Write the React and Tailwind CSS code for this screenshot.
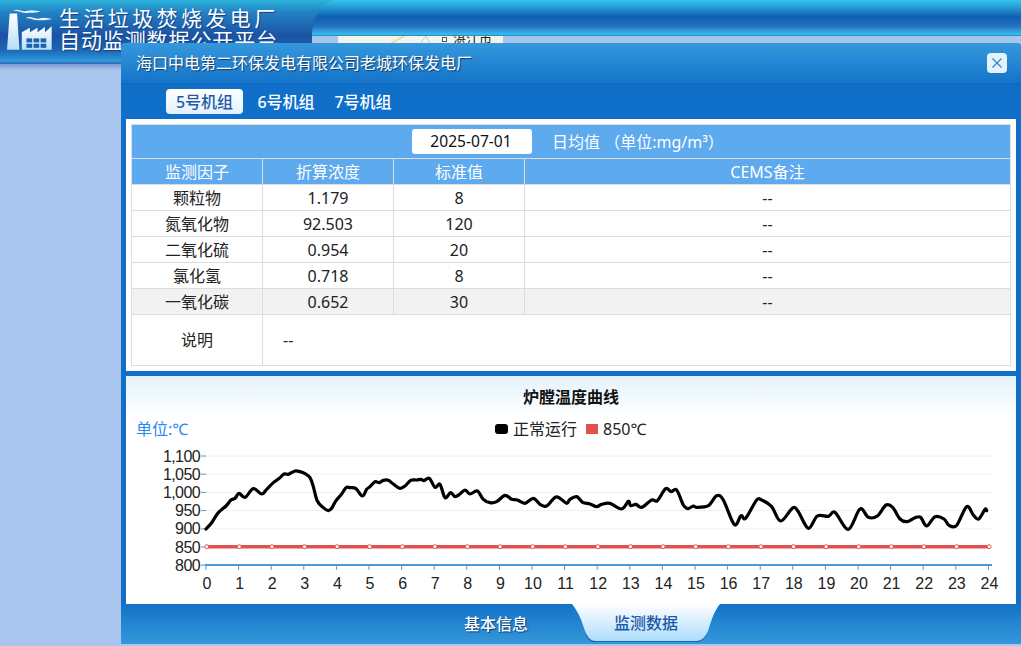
import React from 'react';

const cjk = "font-['Noto_Sans','Noto_Sans_CJK_SC',sans-serif]";

const rows = [
  { name: '颗粒物', value: '1.179', limit: '8' },
  { name: '氮氧化物', value: '92.503', limit: '120' },
  { name: '二氧化硫', value: '0.954', limit: '20' },
  { name: '氯化氢', value: '0.718', limit: '8' },
  { name: '一氧化碳', value: '0.652', limit: '30', hover: true },
];

// traced from the curve, in 3x crop units
const curveLeft = [
  [258, 477], [275, 458], [295, 428], [318, 408], [333, 390], [345, 385], [357, 370], [375, 382], [400, 356],
  [425, 372], [440, 358], [460, 338], [478, 325], [492, 312], [505, 313], [525, 303], [540, 305], [555, 311],
  [570, 323], [580, 350], [592, 393], [610, 413], [625, 422], [635, 415], [648, 392], [665, 372], [678, 353],
  [690, 353], [708, 356], [727, 378], [740, 358], [750, 350], [765, 335], [778, 338], [790, 331], [805, 331],
  [820, 342], [840, 355], [855, 348], [872, 331], [890, 330], [903, 328], [912, 332], [928, 325], [945, 352],
  [960, 343], [975, 383], [992, 368], [1005, 380], [1020, 372], [1035, 360], [1050, 372], [1072, 363], [1090, 388],
  [1110, 398], [1130, 395], [1155, 376], [1175, 388], [1192, 390], [1215, 400], [1240, 385], [1260, 403], [1280, 408],
  [1305, 382], [1320, 385], [1340, 400],
];
const curveRight = [
  [0, 178], [20, 170], [38, 187], [60, 192], [80, 200], [95, 193], [120, 190], [155, 207], [175, 184], [182, 197],
  [198, 193], [215, 202], [245, 180], [262, 182], [287, 146], [303, 155], [320, 150], [340, 195], [353, 206], [370, 198],
  [380, 202], [415, 197], [440, 167], [460, 180], [493, 254], [513, 227], [527, 235], [560, 180], [575, 180], [605, 200],
  [632, 243], [668, 204], [685, 215], [715, 265], [742, 228], [775, 229], [795, 217], [835, 268], [870, 207], [895, 232],
  [922, 228], [948, 195], [968, 202], [990, 237], [1012, 245], [1035, 233], [1052, 232], [1070, 258], [1095, 230], [1122, 237],
  [1137, 256], [1160, 256], [1190, 200], [1210, 225], [1226, 237], [1245, 208], [1250, 212],
];
const curve = [
  ...curveLeft.map(([x, y]) => [120 + x / 3, 370 + y / 3]),
  ...curveRight.map(([x, y]) => [570 + x / 3, 440 + y / 3]),
];

function smooth(pts) {
  let d = `M${pts[0][0]} ${pts[0][1]}`;
  for (let i = 0; i < pts.length - 1; i++) {
    const p0 = pts[i - 1] || pts[i];
    const p1 = pts[i];
    const p2 = pts[i + 1];
    const p3 = pts[i + 2] || p2;
    const c1x = p1[0] + (p2[0] - p0[0]) / 6;
    const c1y = p1[1] + (p2[1] - p0[1]) / 6;
    const c2x = p2[0] - (p3[0] - p1[0]) / 6;
    const c2y = p2[1] - (p3[1] - p1[1]) / 6;
    d += ` C${c1x} ${c1y} ${c2x} ${c2y} ${p2[0]} ${p2[1]}`;
  }
  return d;
}

const yTicks = ['1,100', '1,050', '1,000', '950', '900', '850', '800'];
const hours = Array.from({ length: 25 }, (_, i) => i);

function Logo() {
  return (
    <svg viewBox="18 6 134 124" className="w-[45px] h-[42px] shrink-0">
      <defs>
        <linearGradient id="logoFill" x1="0" y1="0" x2="0" y2="1">
          <stop offset="0" stopColor="#ffffff" />
          <stop offset="1" stopColor="#b5dff7" />
        </linearGradient>
      </defs>
      <path d="M26 22 L48 22 L55 130 L18 130 Z" fill="url(#logoFill)" />
      <path d="M62 130 L62 78 L86 64 L86 78 L109 64 L109 78 L131 62 L131 78 L151 60 L151 130 Z" fill="url(#logoFill)" />
      <g fill="#1c5fae">
        <rect x="76" y="96" width="17" height="12" />
        <rect x="97" y="96" width="17" height="12" />
        <rect x="118" y="96" width="17" height="12" />
        <rect x="76" y="112" width="17" height="12" />
        <rect x="97" y="112" width="17" height="12" />
        <rect x="118" y="112" width="17" height="12" />
      </g>
      <path d="M36 14 C50 4 62 20 80 14 C92 10 104 14 118 16 C100 20 92 20 78 20 C62 22 50 12 36 14 Z" fill="#e4f4fc" />
      <path d="M74 36 C88 26 100 42 116 36 C128 32 140 36 152 38 C134 42 126 42 114 42 C100 44 88 34 74 36 Z" fill="#e4f4fc" />
    </svg>
  );
}

function Header() {
  return (
    <header className="relative h-[70px]">
      <div className="absolute left-0 top-0 w-[312px] h-16 flex items-start pl-[7px] pt-[8px] gap-[7px] bg-[linear-gradient(180deg,#2cb4dc_0px,#2382c4_12px,#1a52a4_36px,#1c66b2_50px,#2b9ade_61px,#3a5fae_64px)]">
        <Logo />
        <div className={`${cjk} mt-[-1px] text-white [text-shadow:1px_1px_1px_#123f86] text-[21px] leading-[22px] whitespace-nowrap`}>
          <div className="tracking-[3.4px]">生活垃圾焚烧发电厂</div>
          <div className="tracking-[0.9px]">自动监测数据公开平台</div>
        </div>
      </div>
      <div className="absolute left-[312px] top-0 w-[26px] h-[35px] bg-[linear-gradient(180deg,#2cb4dc_0px,#2382c4_12px,#1a52a4_36px)]" />
      <div className="absolute left-[312px] right-0 top-0 h-[36px] rounded-tl-[25px_35px] border-b border-[#0d9ac6] bg-[linear-gradient(180deg,#30c6ec_0px,#2aa8dc_5px,#1060b2_17px,#2470c0_26px,#3cb6ec_34px)]" />
      <div className="absolute left-[338px] top-[36px] w-[165px] h-[8px] overflow-hidden bg-[#f5f3ee]">
        <svg viewBox="0 0 165 8" className="absolute inset-0 w-[165px] h-[8px]">
          <path d="M66 0 L52 8" stroke="#f3d58c" strokeWidth="1.5" fill="none" />
          <path d="M88 0 L82 8 M88 0 L92 8" stroke="#c4c6e6" strokeWidth="1" fill="none" />
        </svg>
        <span className="absolute left-[104px] top-[1px] w-[5px] h-[5px] border border-[#555] bg-white" />
        <span className={`${cjk} absolute left-[115px] top-[-7px] text-[13px] leading-[18px] text-[#222] whitespace-nowrap`}>湛江市</span>
      </div>
      <div className="absolute left-0 top-16 w-[121px] h-[6px] bg-[linear-gradient(180deg,#7f97d4,#a9c5ee)]" />
    </header>
  );
}

function DataTable() {
  return (
    <table className="w-[880px] table-fixed border-collapse text-[16px] text-[#222] text-center">
      <colgroup>
        <col className="w-[131px]" />
        <col className="w-[131px]" />
        <col className="w-[131px]" />
        <col />
      </colgroup>
      <thead>
        <tr className="h-[34px] bg-[#5eaaee]">
          <th colSpan={4} className="border border-[#dddddd] p-0 font-normal">
            <div className="flex items-center pl-[280px] text-white">
              <div className="w-[120px] h-[25px] pr-[2px] rounded-[3px] bg-white text-[#111] text-[15.6px] leading-[25px]">2025-07-01</div>
              <span className="ml-[20px] whitespace-pre">日均值 （单位:mg/m³）</span>
            </div>
          </th>
        </tr>
        <tr className="h-[26px] bg-[#5eaaee] text-white">
          {['监测因子', '折算浓度', '标准值', 'CEMS备注'].map((h) => (
            <th key={h} className="border border-[#dddddd] p-0 font-normal">{h}</th>
          ))}
        </tr>
      </thead>
      <tbody>
        {rows.map((r) => (
          <tr key={r.name} className={r.hover ? 'h-[26px] bg-[#f2f2f2]' : 'h-[26px] bg-white'}>
            <td className="border border-[#dddddd] p-0">{r.name}</td>
            <td className="border border-[#dddddd] p-0">{r.value}</td>
            <td className="border border-[#dddddd] p-0">{r.limit}</td>
            <td className="border border-[#dddddd] p-0">--</td>
          </tr>
        ))}
        <tr className="h-[51px]">
          <td className="border border-[#dddddd] p-0">说明</td>
          <td colSpan={3} className="border border-[#dddddd] p-0 pl-5 text-left">--</td>
        </tr>
      </tbody>
    </table>
  );
}

function Plot() {
  return (
    <svg viewBox="126 444 890 160" className="block w-[890px] h-[160px]">
      {[456, 474.2, 492.4, 510.6, 528.8].map((y) => (
        <line key={y} x1="206" x2="992" y1={y} y2={y} stroke="#eeeeee" strokeWidth="1" />
      ))}
      {yTicks.map((t, i) => {
        const y = 456 + i * 18.2;
        return (
          <g key={t}>
            <line x1="201" x2="206" y1={y} y2={y} stroke="#4a9bd0" strokeWidth="1" />
            <text x="200" y={y + 5.5} textAnchor="end" fontSize="16" fill="#222" letterSpacing="-0.6" fontFamily="'Liberation Sans', sans-serif">{t}</text>
          </g>
        );
      })}
      <line x1="205" x2="992" y1="565" y2="565" stroke="#4a9bd0" strokeWidth="2" />
      {hours.map((h) => {
        const x = 206 + h * 32.6;
        return (
          <g key={h}>
            <line x1={x} x2={x} y1="565" y2="570" stroke="#4a9bd0" strokeWidth="1" />
            <text x={207 + h * 32.6} y="589" textAnchor="middle" fontSize="16" fill="#222" fontFamily="'Liberation Sans', sans-serif">{h}</text>
          </g>
        );
      })}
      <line x1="206.7" x2="989.3" y1="546.7" y2="546.7" stroke="#e05252" strokeWidth="3.5" />
      {hours.map((h) => (
        <circle key={h} cx={206.7 + h * 32.6} cy="546.7" r="2" fill="#ffffff" stroke="#e05252" strokeWidth="1" />
      ))}
      <path d={smooth(curve)} fill="none" stroke="#000000" strokeWidth="3.2" strokeLinejoin="round" strokeLinecap="round" />
    </svg>
  );
}

function BottomTabs() {
  return (
    <div className={`${cjk} flex h-[40px] text-[16px] bg-[linear-gradient(180deg,#1472c8,#3498da)]`}>
      <div className="ml-[343px] w-[64px] h-full flex items-center justify-center whitespace-nowrap text-white font-medium [text-shadow:1px_1px_1px_#0b3a70]">基本信息</div>
      <div className="relative ml-[44px] w-[148px] h-[37px] flex items-center justify-center text-[#1d5aa8] font-medium">
        <svg viewBox="0 0 148 38" className="absolute inset-0 w-[148px] h-[38px]">
          <defs>
            <linearGradient id="tabFill" x1="0" y1="0" x2="0" y2="1">
              <stop offset="0" stopColor="#ffffff" />
              <stop offset="1" stopColor="#aedcfd" />
            </linearGradient>
          </defs>
          <path d="M134 30 C132 35 128 38 122 38 L26 38 C20 38 16 35 14 30" fill="none" stroke="#1b62ac" strokeWidth="1.5" />
          <path d="M0 0 L148 0 C143 6 140 14 137 24 C134 33 130 37 124 37 L24 37 C18 37 15 33 12 24 C9 14 5 6 0 0 Z" fill="url(#tabFill)" />
        </svg>
        <span className="relative">监测数据</span>
      </div>
    </div>
  );
}

export default function App() {
  return (
    <div className="relative w-[1021px] h-[646px] overflow-hidden bg-[#a9c5ee]">
      <Header />
      <main className={`${cjk} absolute left-[121px] top-[43px] w-[900px] h-[601px] rounded-[4px] flex flex-col bg-[#0f6fc9]`}>
        <div className="h-[41px] px-[15px] flex items-center justify-between rounded-t-[4px] border-b border-[#0d66ba] bg-[linear-gradient(180deg,#3598dc,#1474ca)]">
          <span className="text-[16px] text-white [text-shadow:1px_1px_1px_#123a66] whitespace-nowrap">海口中电第二环保发电有限公司老城环保发电厂</span>
          <button className="w-5 h-5 mr-[-1px] rounded-[4px] bg-[#e3f2fb] flex items-center justify-center">
            <svg viewBox="0 0 12 12" className="w-3 h-3">
              <path d="M1.5 1.5 L10.5 10.5 M10.5 1.5 L1.5 10.5" stroke="#2f86d0" strokeWidth="1.2" fill="none" />
            </svg>
          </button>
        </div>
        <div className="h-[35px] pl-[45px] pt-[5px] flex items-start gap-[5px] text-[16px] font-medium">
          <div className="w-[77px] h-[25px] rounded-[4px] bg-[linear-gradient(180deg,#ffffff,#e3f1fb)] text-[#1d5aa8] text-center leading-[26px]">5号机组</div>
          <div className="w-[76px] h-[25px] text-white text-center leading-[26px]">6号机组</div>
          <div className="w-[76px] h-[25px] ml-[-4px] text-white text-center leading-[26px]">7号机组</div>
        </div>
        <section className="ml-[5px] w-[890px] h-[252px] p-[5px] bg-white">
          <DataTable />
        </section>
        <section className="mt-[5px] ml-[5px] w-[890px] h-[228px] flex flex-col bg-[linear-gradient(180deg,#e3f2fc_0px,#ffffff_40px)]">
          <h2 className="h-[44px] pt-[9px] text-center text-[16px] leading-[24px] font-bold text-[#111]">炉膛温度曲线</h2>
          <div className="relative h-[24px] flex items-center text-[16px] text-[#222]">
            <span className="absolute left-[10px] top-[-1px] leading-[20px] text-[#2b87f0]">单位:℃</span>
            <div className="ml-[369px] mt-[-6px] flex items-center">
              <span className="w-[13px] h-[10px] rounded-[3px] bg-black" />
              <span className="ml-[5px]">正常运行</span>
              <span className="ml-[9px] w-[12px] h-[10px] bg-[#e05252]" />
              <span className="ml-[5px]">850℃</span>
            </div>
          </div>
          <Plot />
        </section>
        <BottomTabs />
      </main>
    </div>
  );
}
